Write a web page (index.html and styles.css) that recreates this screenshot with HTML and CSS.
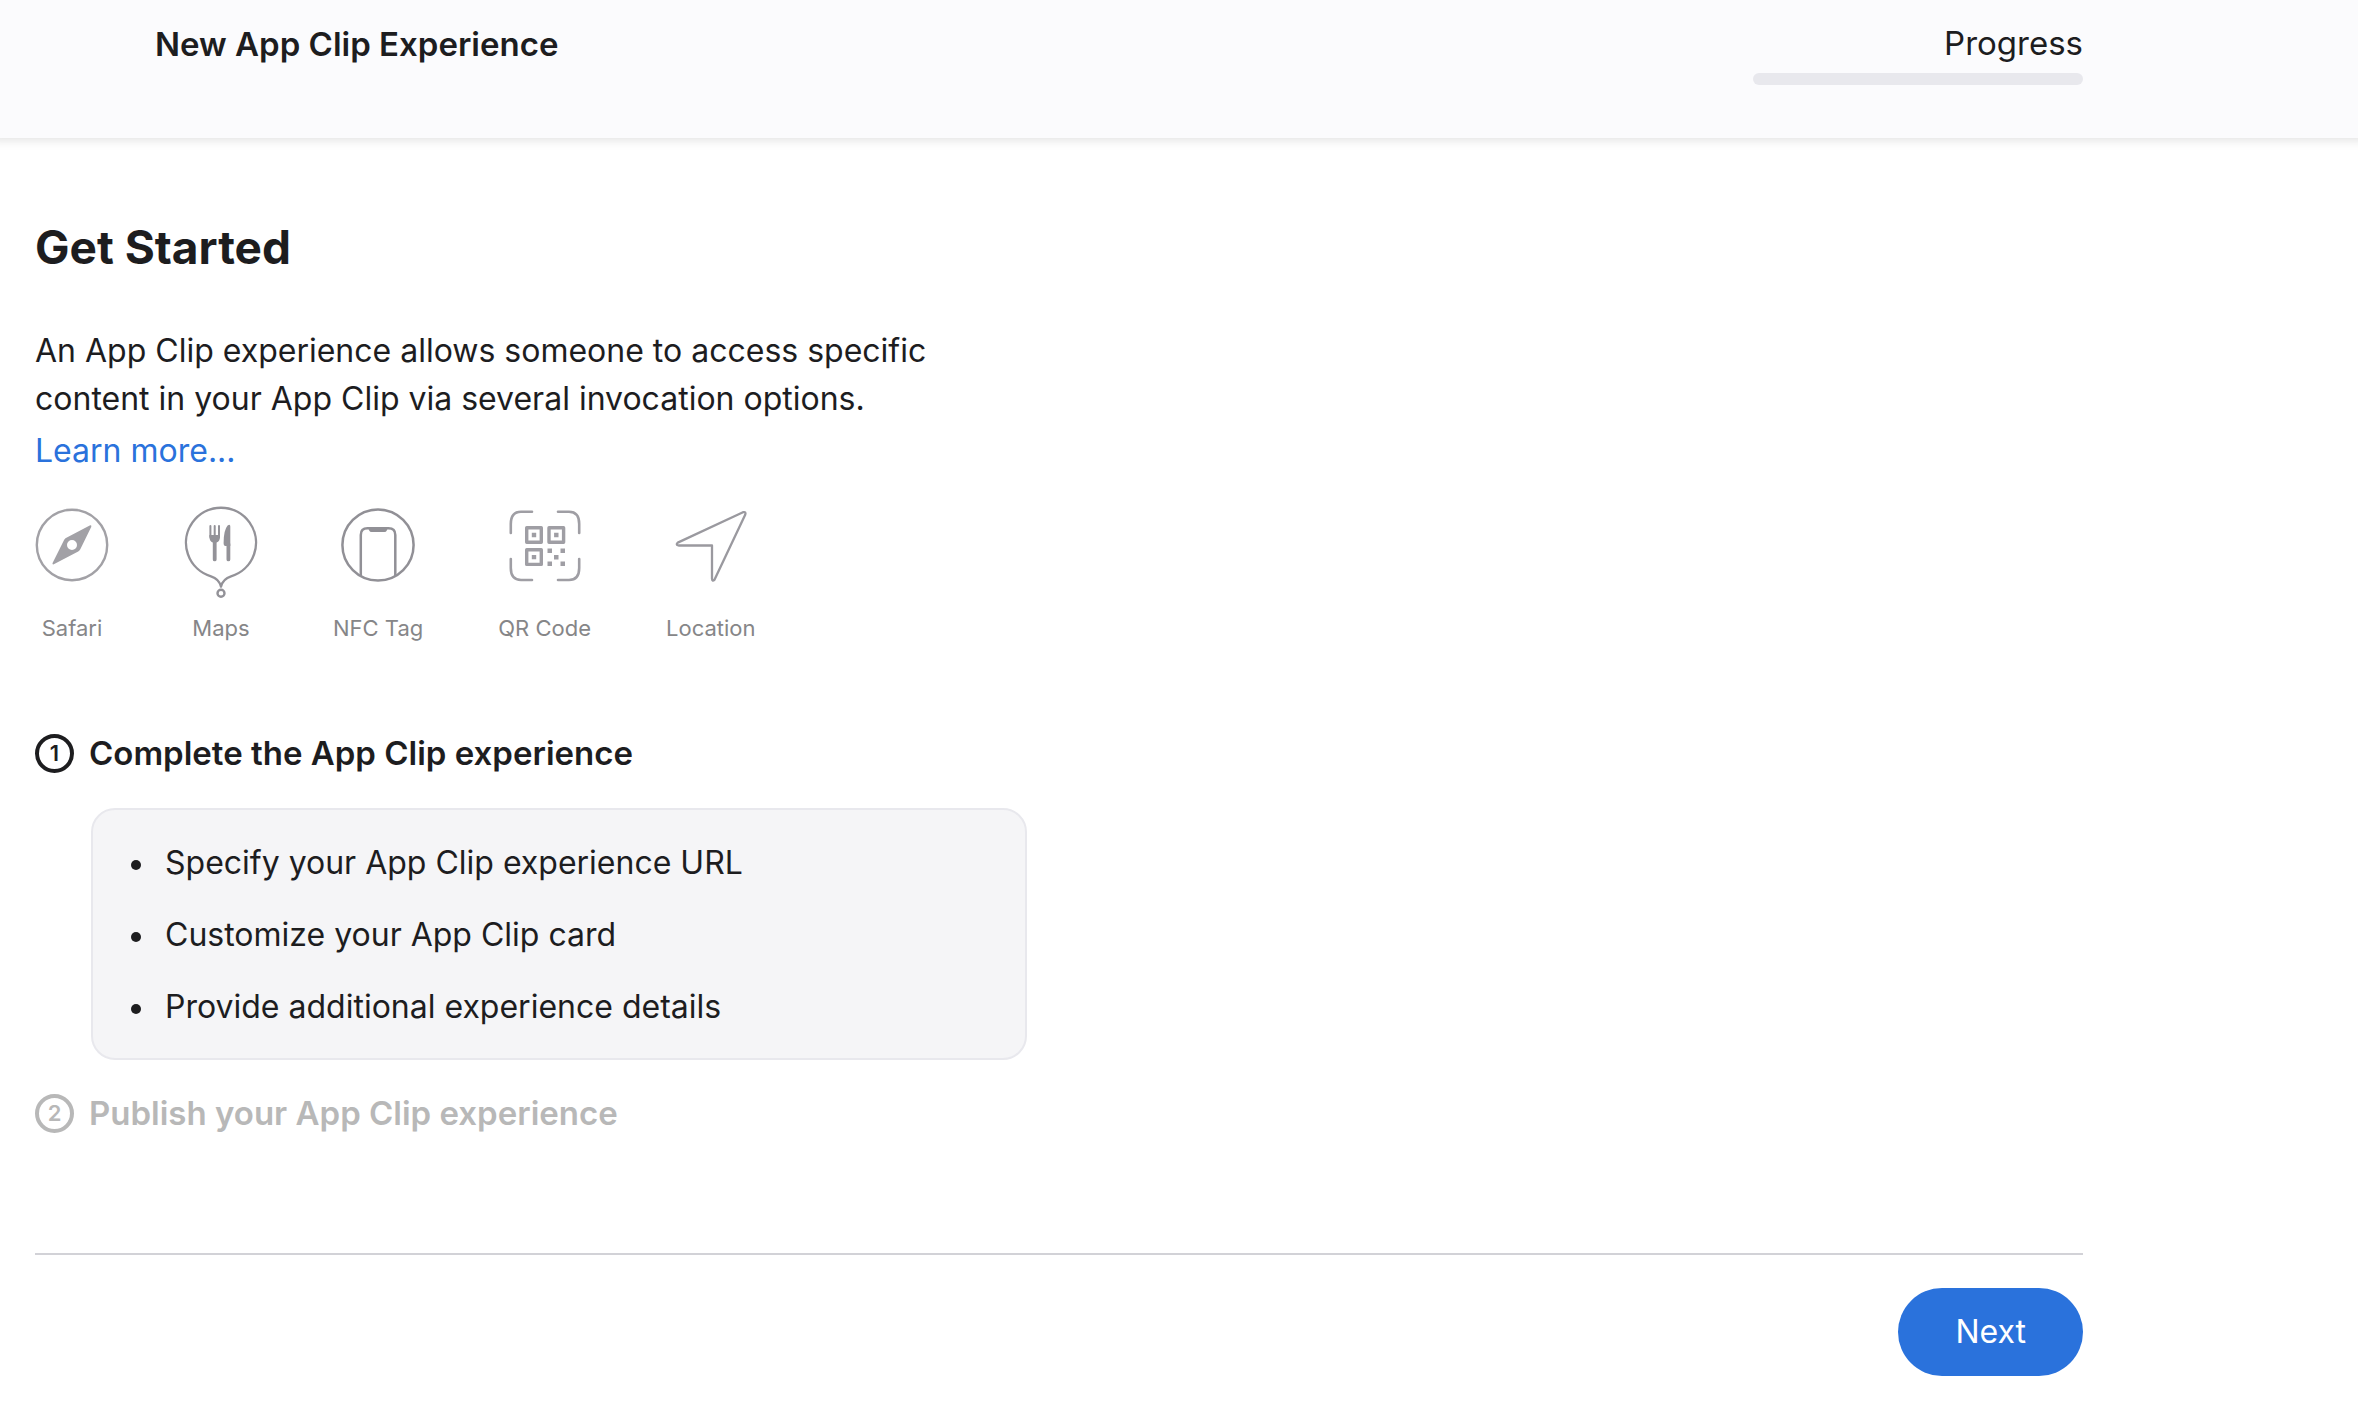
FILE: index.html
```html
<!DOCTYPE html>
<html lang="en">
<head>
<meta charset="utf-8">
<meta name="viewport" content="width=device-width, initial-scale=1">
<title>New App Clip Experience</title>
<link rel="stylesheet" href="styles.css">
</head>
<body>
<header class="topbar">
  <div class="topbar-inner">
    <h1 class="topbar-title">New App Clip Experience</h1>
    <div class="progress">
      <label class="progress-label" for="setup-progress">Progress</label>
      <progress class="progress-bar" id="setup-progress" value="0" max="100"></progress>
    </div>
  </div>
</header>

<main class="page">
  <h2 class="heading">Get Started</h2>
  <p class="intro">An App Clip experience allows someone to access specific content in your App Clip via several invocation options.</p>
  <a class="learn-more" href="#">Learn more...</a>

  <ul class="methods">
    <li class="method">
      <svg class="method-icon" viewBox="0 0 74 94" aria-hidden="true">
        <circle cx="37" cy="39" r="35.2" fill="none" stroke="#a2a1a6" stroke-width="2.4"/>
        <path fill="#a2a1a6" fill-rule="evenodd" d="M55.2 19.3Q57 19 56.2 20.9L45.3 43.3Q44.6 44.8 43.2 45.6L18.8 58.3Q17 58.8 17.6 57L29.2 33.8Q30 32.4 31.4 31.7ZM37 34a5 5 0 1 0 0 10a5 5 0 1 0 0-10Z"/>
      </svg>
      <span>Safari</span>
    </li>
    <li class="method">
      <svg class="method-icon" viewBox="0 0 74 94" aria-hidden="true">
        <g fill="none" stroke="#939298" stroke-linecap="round" stroke-linejoin="round">
          <path stroke-width="2.4" d="M37 80.5C35.6 75 33 72.2 27 70.3A35 35 0 1 1 47 70.3C41 72.2 38.4 75 37 80.5"/>
          <circle cx="37" cy="87.2" r="3.5" stroke-width="2.4"/>
          <path stroke-width="2" d="M26.4 20V31M30.7 20V31M35 20V31"/>
          <path stroke-width="3.8" d="M30.7 35V53.4M44.4 38V53.4"/>
        </g>
        <path fill="#939298" d="M25.4 29H36V31Q36 35 32.6 36.6H28.8Q25.4 35 25.4 31ZM46.3 20.4V40H41.4Q39.6 40 39.6 37Q39.6 24 43.6 19.4Q46.3 17.6 46.3 20.4Z"/>
      </svg>
      <span>Maps</span>
    </li>
    <li class="method">
      <svg class="method-icon" viewBox="0 0 74 94" aria-hidden="true">
        <g fill="none" stroke="#919096" stroke-width="2.5">
          <circle cx="37" cy="39" r="35.6"/>
          <path d="M19.8 70V29Q19.8 22.3 26.5 22.3H47.5Q54.3 22.3 54.3 29V70"/>
        </g>
        <path fill="#919096" d="M27 21.5H47L45.8 24.4Q45.2 26 43.4 26H30.6Q28.8 26 28.2 24.4Z"/>
      </svg>
      <span>NFC Tag</span>
    </li>
    <li class="method">
      <svg class="method-icon" viewBox="0 0 74 94" aria-hidden="true">
        <g fill="none" stroke="#9f9ea4">
          <path stroke-width="2.6" stroke-linecap="round" d="M2.8 27V18Q2.8 5.8 13 5.8H24M50 5.8H61Q71.2 5.8 71.2 18V27M71.2 53V62Q71.2 74 61 74H50M24 74H13Q2.8 74 2.8 62V53"/>
          <path stroke-width="3.4" stroke-linejoin="round" d="M18.7 21.7H33.3V36.3H18.7ZM41 21.7H55.6V36.3H41ZM18.7 43.8H33.3V58.4H18.7Z"/>
        </g>
        <path fill="#9f9ea4" d="M23.8 26.8h4.4v4.4h-4.4ZM46.1 26.8h4.4v4.4h-4.4ZM23.8 48.9h4.4v4.4h-4.4ZM39.5 42.4h4.5v4.5h-4.5ZM52.5 42.4h4.5v4.5h-4.5ZM46 48.9h4.5v4.5h-4.5ZM39.5 55.4h4.5v4.5h-4.5ZM52.5 55.4h4.5v4.5h-4.5Z"/>
      </svg>
      <span>QR Code</span>
    </li>
    <li class="method">
      <svg class="method-icon" viewBox="0 0 74 94" aria-hidden="true">
        <path fill="none" stroke="#9a999f" stroke-width="2.3" stroke-linejoin="round" d="M69 6.2Q72.4 5.4 71.2 8.8L40.6 73.6Q38.2 76 38 72.8V39.5H4.6Q1.4 38.6 3.8 36.6Z"/>
      </svg>
      <span>Location</span>
    </li>
  </ul>

  <ol class="steps">
    <li>
      <h3 class="step-title"><span class="step-number">1</span>Complete the App Clip experience</h3>
      <ul class="tasks">
        <li>Specify your App Clip experience URL</li>
        <li>Customize your App Clip card</li>
        <li>Provide additional experience details</li>
      </ul>
    </li>
    <li>
      <h3 class="step-title step-title-upcoming"><span class="step-number">2</span>Publish your App Clip experience</h3>
    </li>
  </ol>

  <footer class="actions">
    <button class="next" type="button">Next</button>
  </footer>
</main>
</body>
</html>
```
FILE: styles.css
```css
* {
  box-sizing: border-box;
}

body {
  margin: 0;
  background: #fff;
  color: #1d1d1f;
  font-family: Inter, "Liberation Sans", sans-serif;
  font-size: 32px;
  line-height: 48px;
}

h1, h2, h3, p, ul, ol {
  margin: 0;
  padding: 0;
}

ul, ol {
  list-style: none;
}

.topbar {
  padding: 19px 35px 53px;
  background: #fbfbfd;
  box-shadow: 0 -8px 10px 10px rgba(0, 0, 0, 0.12);
}

.topbar-inner {
  display: flex;
  justify-content: space-between;
  max-width: 2048px;
  padding-left: 120px;
}

.topbar-title {
  font-size: 33px;
  font-weight: 600;
  line-height: 50px;
}

.progress {
  display: flex;
  flex-direction: column;
  align-items: flex-end;
  gap: 6px;
}

.progress-label {
  font-size: 33px;
}

.progress-bar {
  appearance: none;
  display: block;
  width: 330px;
  height: 12px;
  border: 0;
  border-radius: 6px;
  overflow: hidden;
  background: #e8e8ed;
}

.progress-bar::-webkit-progress-bar {
  background: #e8e8ed;
}

.progress-bar::-webkit-progress-value {
  background: #2a72dc;
}

.page {
  max-width: 2118px;
  padding: 80px 35px 32px;
}

.heading {
  font-size: 46px;
  font-weight: 700;
  line-height: 58px;
}

.intro {
  max-width: 936px;
  margin-top: 51px;
}

.learn-more {
  display: inline-block;
  margin-top: 4px;
  color: #2a72dc;
  text-decoration: none;
}

.methods {
  display: flex;
  gap: 75px;
  margin-top: 31px;
}

.method {
  display: flex;
  flex-direction: column;
  align-items: center;
  gap: 12px;
  color: #868688;
  font-size: 22px;
  line-height: 32px;
}

.method-icon {
  display: block;
  width: 74px;
  height: 94px;
}

.steps {
  display: flex;
  flex-direction: column;
  gap: 29px;
  margin-top: 85px;
}

.step-title {
  display: flex;
  align-items: center;
  gap: 15px;
  font-size: 33px;
  font-weight: 600;
}

.step-title-upcoming {
  color: #b8b8b8;
}

.step-number {
  display: flex;
  align-items: center;
  justify-content: center;
  width: 39px;
  height: 39px;
  border: 4px solid currentColor;
  border-radius: 50%;
  font-size: 22px;
  line-height: 32px;
}

.tasks {
  display: flex;
  flex-direction: column;
  gap: 24px;
  max-width: 936px;
  margin: 31px 0 0 56px;
  padding: 29px 38px 27px;
  border: 2px solid #e8e8ed;
  border-radius: 24px;
  background: #f5f5f7;
}

.tasks li {
  display: flex;
  align-items: center;
  gap: 24px;
}

.tasks li::before {
  content: "";
  width: 10px;
  height: 10px;
  margin-top: 4px;
  border-radius: 50%;
  background: #1d1d1f;
}

.actions {
  display: flex;
  justify-content: flex-end;
  margin-top: 116px;
  padding-top: 33px;
  border-top: 2px solid #d2d2d7;
}

.next {
  padding: 20px 57px;
  border: 0;
  border-radius: 44px;
  background: #2a72dc;
  color: #fff;
  font: inherit;
  cursor: pointer;
}
```
